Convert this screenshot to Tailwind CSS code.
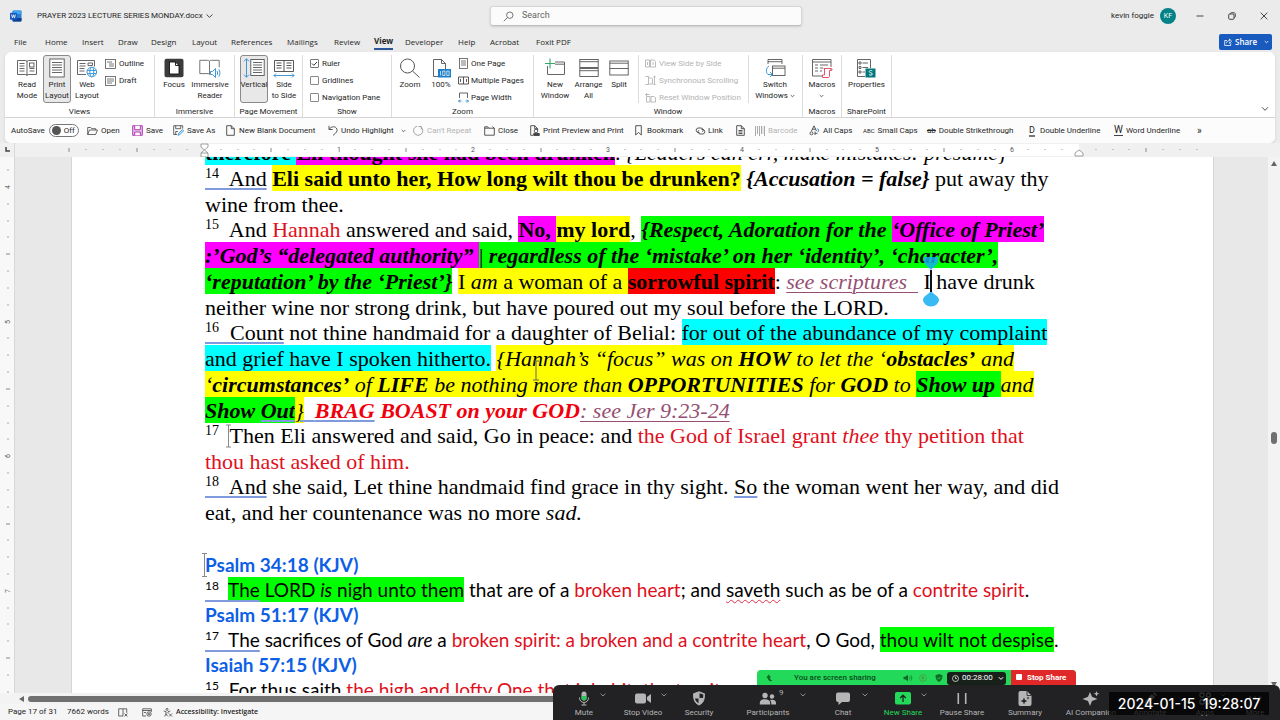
<!DOCTYPE html>
<html lang="en">
<head>
<meta charset="utf-8">
<title>PRAYER 2023 LECTURE SERIES MONDAY.docx</title>
<script src="https://cdn.jsdelivr.net/npm/@tailwindcss/browser@4"></script>
</head>
<body class="relative flex h-screen flex-col overflow-hidden bg-[#ebebeb] font-[Roboto,sans-serif] text-[8px] text-[#262626]">

<!-- Title bar -->
<header class="grid h-8 shrink-0 grid-cols-[490fr_312fr_478fr] items-center">
  <div class="flex items-center pl-[10px]">
    <svg width="12" height="12" viewBox="0 0 12 12"><rect x="2.500" y="0.500" width="9" height="11" rx="1" fill="#2b7cd3"/><path d="M2.500 1.500a1 1 0 0 1 1-1h7a1 1 0 0 1 1 1V4h-9z" fill="#41a5ee"/><path d="M2.500 8h9v2.500a1 1 0 0 1-1 1h-7a1 1 0 0 1-1-1z" fill="#103f91"/><rect x="0" y="2.700" width="7" height="7" rx="0.800" fill="#185abd"/><path d="M1.600 4.500l.9 3.400 1-3.100 1 3.100.9-3.400" fill="none" stroke="#fff" stroke-width="0.800"/></svg>
    <h1 class="ml-[15px] whitespace-nowrap text-[#262626]">PRAYER 2023 LECTURE SERIES MONDAY.docx</h1>
    <svg class="ml-[3px]" width="7" height="6" viewBox="0 0 7 6"><path d="M.6 1.500l2.900 2.900 2.900-2.900" fill="none" stroke="#333" stroke-width="0.900"/></svg>
  </div>
  <label class="flex h-5 items-center rounded-[3px] border border-[#d6d6d6] border-b-[#bdbdbd] bg-[#fbfbfb] pl-3 shadow-sm">
    <svg width="11" height="11" viewBox="0 0 11 11"><circle cx="6.800" cy="4.200" r="3.200" fill="none" stroke="#666" stroke-width="0.900"/><path d="M4.500 6.500L.8 10.200" stroke="#666" stroke-width="0.900"/></svg>
    <input class="ml-[8px] w-40 bg-transparent text-[9px] outline-none placeholder:text-[#666]" placeholder="Search" aria-label="Search">
  </label>
  <div class="flex items-center justify-end">
    <span class="text-[#262626]">kevin foggie</span>
    <span class="ml-[6px] flex size-4 items-center justify-center rounded-full bg-[#038387] text-[7px] text-white">KF</span>
    <button class="ml-[18px] flex w-3 justify-center" aria-label="Minimize"><svg width="8" height="8" viewBox="0 0 8 8"><path d="M.5 4h7" stroke="#333" stroke-width="0.900"/></svg></button>
    <button class="ml-[20px] flex w-3 justify-center" aria-label="Restore"><svg width="8" height="8" viewBox="0 0 8 8" fill="none" stroke="#333" stroke-width="0.900"><rect x="0.700" y="2" width="5.300" height="5.300" rx="1"/><path d="M2.300 1.700c.1-.6.500-1 1.100-1h2.400c.9 0 1.500.6 1.500 1.500v2.300c0 .6-.4 1-1 1.100"/></svg></button>
    <button class="ml-[20px] mr-[10px] flex w-3 justify-center" aria-label="Close"><svg width="8" height="8" viewBox="0 0 8 8"><path d="M.7.7l6.600 6.600M7.300.7L.7 7.300" stroke="#333" stroke-width="0.900"/></svg></button>
  </div>
</header>

<!-- Ribbon tabs -->
<nav class="flex h-5 shrink-0 items-center pl-[14px] leading-[14px] font-['Open_Sans',sans-serif]">
  <a href="#" class="w-[31px]">File</a><a href="#" class="w-[37px]">Home</a><a href="#" class="w-[36px]">Insert</a><a href="#" class="w-[33px]">Draw</a><a href="#" class="w-[41px]">Design</a><a href="#" class="w-[39px]">Layout</a><a href="#" class="w-[56px]">References</a><a href="#" class="w-[47px]">Mailings</a><a href="#" class="w-[40px]">Review</a><a href="#" class="w-[31px]"><span class="inline-block border-b-2 border-[#2b579a] font-bold text-[#1f1f1f]">View</span></a><a href="#" class="w-[53px]">Developer</a><a href="#" class="w-[32px]">Help</a><a href="#" class="w-[46px]">Acrobat</a><a href="#" class="whitespace-nowrap">Foxit PDF</a>
  <button class="ml-auto mr-2 flex h-4 w-[53px] items-center rounded-[2px] bg-[#185abd] pl-[5px] text-white">
    <svg width="8" height="8" viewBox="0 0 8 8" fill="none" stroke="#fff" stroke-width="0.800"><path d="M3 2.500H.7v5h6V5.300M2.500 5.300c.2-1.800 1.300-2.700 3-2.700V.9l2 2.300-2 2.100V3.800"/></svg>
    <span class="ml-[3px] text-[8px] font-semibold">Share</span>
    <svg class="ml-auto mr-[3px]" width="5" height="4" viewBox="0 0 5 4"><path d="M.7 1l1.800 1.800L4.300 1" fill="none" stroke="#fff" stroke-width="0.800"/></svg>
  </button>
</nav>

<!-- Ribbon -->
<section class="mx-[5px] flex h-[91px] shrink-0 flex-col rounded-md bg-white shadow-sm">
  <div class="flex h-[66px] border-b border-[#d4d4d4] pt-[3px] leading-[11px]">

    <div class="flex w-[150px] flex-col border-r border-[#dcdcdc]">
      <div class="flex h-[49px] gap-[2px] pl-2">
        <button class="flex w-7 flex-col items-center pt-[3px]"><svg class="mb-px shrink-0" width="22" height="20" viewBox="0 0 22 20" fill="none" stroke="#555" stroke-width="0.900"><path d="M1.500 2.500h8c1 0 1.500.5 1.500 1.500 0-1 .5-1.500 1.500-1.500h8v14h-8c-1 0-1.500.3-1.500 1.200 0-.9-.5-1.200-1.500-1.200h-8zM11 4v13.500"/><path d="M3.500 5.500h5M3.500 8h5M3.500 10.500h5M3.500 13h5M13.500 10.500h5M13.500 13h5"/><rect x="13.500" y="5" width="4.500" height="4"/></svg>Read<br>Mode</button>
        <button class="flex w-7 flex-col items-center rounded-[3px] border border-[#8a8a8a] bg-[#e8e8e8] pt-[2px]"><svg class="mb-px shrink-0" width="16" height="20" viewBox="0 0 16 20" fill="#fff" stroke="#555" stroke-width="0.900"><rect x="0.800" y="1" width="14.400" height="18"/><path d="M3 4.500h10M3 7h10M3 9.500h10M3 12h10M3 14.500h10"/></svg>Print<br>Layout</button>
        <button class="flex w-7 flex-col items-center pt-[3px]"><svg class="mb-px shrink-0" width="22" height="20" viewBox="0 0 22 20" fill="none" stroke="#555" stroke-width="0.900"><path d="M10 16.500H1.500v-14h17v6"/><path d="M3.500 5.500h6M3.500 8h6M3.500 10.500h5M3.500 13h5M12 5h4.500v2.500H12z"/><g stroke="#2a8dd4" fill="#fff"><circle cx="15.800" cy="14" r="4.800"/><ellipse cx="15.800" cy="14" rx="2" ry="4.800"/><path d="M11.300 12.400h9M11.300 15.600h9"/></g></svg>Web<br>Layout</button>
        <div class="flex flex-col gap-[6px] pl-[2px] pt-[3px]">
          <button class="flex items-center gap-[3px]"><svg width="11" height="10" viewBox="0 0 11 10" fill="none" stroke="#555" stroke-width="0.800"><rect x="0.500" y="0.500" width="10" height="9"/><path d="M2 3h5M4 5h5M4 7h5"/></svg>Outline</button>
          <button class="flex items-center gap-[3px]"><svg width="11" height="10" viewBox="0 0 11 10" fill="none" stroke="#555" stroke-width="0.800"><rect x="0.500" y="0.500" width="10" height="9"/><path d="M2 3h7M2 5h7M2 7h5"/></svg>Draft</button>
        </div>
      </div>
      <p class="mt-[3px] text-center">Views</p>
    </div>

    <div class="flex w-[80px] flex-col border-r border-[#dcdcdc]">
      <div class="flex h-[49px] pl-[3px]">
        <button class="flex w-8 flex-col items-center pt-[3px]"><svg class="mb-px shrink-0" width="20" height="20" viewBox="0 0 20 20"><rect x="0.500" y="0.800" width="19" height="18.400" rx="2" fill="#3b3b3b"/><path d="M5.500 4h6l3.500 3.500V16H5.500z" fill="#fff" stroke="#111" stroke-width="0.900"/><path d="M11.500 4v3.500H15" fill="none" stroke="#111" stroke-width="0.900"/></svg>Focus</button>
        <button class="flex w-10 flex-col items-center pt-[3px]"><svg class="mb-px shrink-0" width="22" height="20" viewBox="0 0 22 20" fill="none" stroke="#666" stroke-width="0.900"><path d="M10.500 17c0-.9-.6-1.400-1.500-1.400H.8V2.300h8c1.200 0 1.700.6 1.700 1.600 0-1 .6-1.600 1.700-1.600h8v7M10.500 4v12"/><g stroke="#2a8dd4"><path d="M11.500 13.500h2l3-3v9l-3-3h-2zM18 13c.8 1.200.8 2.800 0 4M19.800 11.300c1.500 2.200 1.500 5 0 7.400"/></g></svg>Immersive<br>Reader</button>
      </div>
      <p class="mt-[3px] text-center">Immersive</p>
    </div>

    <div class="flex w-[68px] flex-col border-r border-[#dcdcdc]">
      <div class="flex h-[49px] pl-[5px]">
        <button class="flex w-7 flex-col items-center rounded-[3px] border border-[#8a8a8a] bg-[#e8e8e8] pt-[2px]"><svg class="mb-px shrink-0" width="22" height="20" viewBox="0 0 22 20" fill="none" stroke="#555" stroke-width="0.900"><path d="M3.500.8v18.400M1 3.300L3.500.8 6 3.300M1 16.700l2.500 2.500L6 16.700" stroke="#2a8dd4"/><rect x="7.800" y="1.500" width="13.400" height="16" fill="#fff"/><path d="M10 4.500h9M10 7h9M10 9.500h9M10 12h9M10 14.500h9"/></svg>Vertical</button>
        <button class="flex w-8 flex-col items-center pt-[3px]"><svg class="mb-px shrink-0" width="22" height="20" viewBox="0 0 22 20" fill="none" stroke="#444" stroke-width="0.900"><path d="M1.500 2.500h19v11h-19zM11 2.500v11" /><path d="M3.500 5h5M3.500 7.500h5M3.500 10h5M13.500 5h5M13.500 7.500h5M13.500 10h5"/><path d="M1 17.500h20M3 15.500l-2 2 2 2M19 15.500l2 2-2 2" stroke="#2a8dd4"/></svg>Side<br>to Side</button>
      </div>
      <p class="mt-[3px] whitespace-nowrap text-center">Page Movement</p>
    </div>

    <div class="flex w-[89px] flex-col border-r border-[#dcdcdc]">
      <div class="flex h-[49px] flex-col gap-[6px] pl-[7px] pt-[3px]">
        <label class="flex items-center gap-[3px] whitespace-nowrap"><span class="relative flex"><input type="checkbox" checked class="size-[9px] appearance-none rounded-[1px] border border-[#777] bg-white"><svg class="absolute inset-0" width="9" height="9" viewBox="0 0 9 9"><path d="M2 4.500l1.800 1.800L7 3" fill="none" stroke="#333"/></svg></span>Ruler</label>
        <label class="flex items-center gap-[3px] whitespace-nowrap"><input type="checkbox" class="size-[9px] appearance-none rounded-[1px] border border-[#888] bg-white">Gridlines</label>
        <label class="flex items-center gap-[3px] whitespace-nowrap"><input type="checkbox" class="size-[9px] appearance-none rounded-[1px] border border-[#888] bg-white">Navigation Pane</label>
      </div>
      <p class="mt-[3px] text-center">Show</p>
    </div>

    <div class="flex w-[142px] flex-col border-r border-[#dcdcdc]">
      <div class="flex h-[49px] pl-[2px]">
        <button class="flex w-8 flex-col items-center pt-[3px]"><svg class="mb-px shrink-0" width="20" height="20" viewBox="0 0 20 20" fill="none" stroke="#555"><circle cx="7.500" cy="8" r="7"/><path d="M12.500 13l7 6.500"/></svg>Zoom</button>
        <button class="flex w-[30px] flex-col items-center pt-[3px]"><svg class="mb-px shrink-0" width="20" height="20" viewBox="0 0 20 20"><path d="M7 18.500H2.500v-17h8l4 4V11M10.500 1.500v4h4" fill="none" stroke="#555" stroke-width="0.900"/><rect x="7" y="11" width="13" height="8.500" fill="#1d7fc9"/><path d="M9.500 13v4.500M11.700 13h2.300v4.500h-2.300zM15.800 13h2.300v4.500h-2.300z" fill="none" stroke="#fff" stroke-width="0.700"/></svg>100%</button>
        <div class="flex flex-col gap-[6px] whitespace-nowrap pl-[2px] pt-[3px]">
          <button class="flex items-center gap-[2px]"><svg width="11" height="11" viewBox="0 0 11 11" fill="none" stroke="#555" stroke-width="0.800"><rect x="1.500" y="0.500" width="8" height="10"/><path d="M3 3h5M3 5h5M3 7h5"/></svg>One Page</button>
          <button class="flex items-center gap-[2px]"><svg width="11" height="11" viewBox="0 0 11 11" fill="none" stroke="#444" stroke-width="0.900"><path d="M.5 2h10v7H.5zM5.500 2v7M2.500 4v3M8.500 4v3" /></svg>Multiple Pages</button>
          <button class="flex items-center gap-[2px]"><svg width="11" height="11" viewBox="0 0 11 11" fill="none" stroke="#555" stroke-width="0.900"><path d="M1.500 6V1h8v5"/><path d="M.5 9h3M7.500 9h3M2 7.500L.5 9 2 10.500M9 7.500L10.500 9 9 10.500" stroke="#2a8dd4"/></svg>Page Width</button>
        </div>
      </div>
      <p class="mt-[3px] text-center">Zoom</p>
    </div>

    <div class="flex w-[269px] flex-col border-r border-[#dcdcdc]">
      <div class="flex h-[49px] pl-1">
        <button class="flex w-[34px] flex-col items-center pt-[3px]"><svg class="mb-px shrink-0" width="22" height="20" viewBox="0 0 22 20" fill="none" stroke="#555" stroke-width="0.900"><path d="M11 4h9.500v12.500h-17V8M11 6.200h9.500"/><path d="M6 .5v10M1 5.500h10" stroke="#35a86b" stroke-width="1.100"/></svg>New<br>Window</button>
        <button class="flex w-[33px] flex-col items-center whitespace-nowrap pt-[3px]"><svg class="mb-px shrink-0" width="20" height="20" viewBox="0 0 20 20" fill="none" stroke="#555" stroke-width="0.900"><rect x="0.800" y="1.500" width="18.400" height="8"/><rect x="0.800" y="10.500" width="18.400" height="8"/><path d="M.8 3.700h18.400M.8 12.700h18.400"/></svg>Arrange<br>All</button>
        <button class="flex w-[28px] flex-col items-center pt-[3px]"><svg class="mb-px shrink-0" width="20" height="20" viewBox="0 0 20 20" fill="none" stroke="#555" stroke-width="0.900"><rect x="0.800" y="3" width="18.400" height="14"/><path d="M.8 5.200h18.400M.8 10.500h18.400"/></svg>Split</button>
        <div class="ml-[5px] flex w-[111px] flex-col gap-[6px] whitespace-nowrap border-x border-[#dcdcdc] pl-[6px] pt-[3px] text-[#b3b3b3]">
          <button class="flex items-center gap-[3px]" disabled><svg width="11" height="11" viewBox="0 0 11 11" fill="none" stroke="#b3b3b3" stroke-width="0.900"><path d="M.5 2h4v7h-4zM5.500 2H9l1.500 1.500V9h-5zM2.500 4v3M8 4v3"/></svg>View Side by Side</button>
          <button class="flex items-center gap-[3px]" disabled><svg width="11" height="11" viewBox="0 0 11 11" fill="none" stroke="#b3b3b3" stroke-width="0.900"><path d="M.5 1.500h3v8h-3M4 3h2.500l1 1v5H4M9.500 1v9M8.300 2.200L9.500 1l1.200 1.200M8.300 8.800L9.500 10l1.200-1.200"/></svg>Synchronous Scrolling</button>
          <button class="flex items-center gap-[3px]" disabled><svg width="11" height="11" viewBox="0 0 11 11" fill="none" stroke="#b3b3b3" stroke-width="0.900"><path d="M1.500 4.500h3.500v5.500H1.500zM6 4.500h3l1.500 1.500v4H6zM.5 2.500h4M2 1L.5 2.500 2 4"/></svg>Reset Window Position</button>
        </div>
        <button class="flex w-[52px] flex-col items-center pt-[3px]"><svg class="mb-px shrink-0" width="22" height="20" viewBox="0 0 22 20" fill="none" stroke="#555" stroke-width="0.900"><path d="M4 6V1.500h14V6M4 3.700h14"/><rect x="8.500" y="8" width="12.500" height="9.500" fill="#fff"/><path d="M8.500 10.200H21"/><path d="M5 8c-3 2-3.500 6-1 8.500h4M6 14l2.500 2.500L6 19" stroke="#2a8dd4"/></svg>Switch<span class="flex items-center gap-[2px]">Windows <svg width="5" height="4" viewBox="0 0 5 4"><path d="M.7 1l1.800 1.800L4.300 1" fill="none" stroke="#444" stroke-width="0.800"/></svg></span></button>
      </div>
      <p class="mt-[3px] text-center">Window</p>
    </div>

    <div class="flex w-[39px] flex-col border-r border-[#dcdcdc]">
      <div class="flex h-[49px] justify-center">
        <button class="flex flex-col items-center pt-[3px]"><svg class="mb-px shrink-0" width="22" height="20" viewBox="0 0 22 20" fill="none" stroke="#555" stroke-width="0.900"><path d="M11 18H1.500V1.500h18.500V9M1.500 4H20M4 7h3M9 7h8M4 10h3M9 10h3M4 13h3M9 13h2"/><path d="M12.500 10.500h7.500v2h-1.500V18c0 1-.5 1.500-1.500 1.500h-5.500V17h2V10.500M20 10.500c1.500 0 1.500 2 0 2" stroke="#e0415a" fill="#fff"/></svg>Macros<svg class="mt-[4px]" width="5" height="4" viewBox="0 0 5 4"><path d="M.7 1l1.800 1.800L4.300 1" fill="none" stroke="#444" stroke-width="0.800"/></svg></button>
      </div>
      <p class="mt-[3px] text-center">Macros</p>
    </div>

    <div class="flex w-[50px] flex-col border-r border-[#dcdcdc]">
      <div class="flex h-[49px] justify-center">
        <button class="flex flex-col items-center pt-[3px]"><svg class="mb-px shrink-0" width="20" height="20" viewBox="0 0 20 20" fill="none" stroke="#555" stroke-width="0.900"><path d="M9 18.500H1.500v-17h13V10M6.500 5H12M6.500 9.500H12M6.500 14H9"/><path d="M3 4h2v2H3zM3 8.500h2v2H3zM3 13h2v2H3z"/><rect x="9.500" y="10.500" width="10" height="9" fill="#03787c" stroke="none"/><path d="M16.300 12.900c-.8-.6-3.100-.6-3.100.7 0 1.500 3.200.9 3.200 2.400 0 1.400-2.500 1.400-3.400.6" stroke="#fff"/></svg>Properties</button>
      </div>
      <p class="mt-[3px] text-center">SharePoint</p>
    </div>
    <button class="ml-auto mr-[6px] self-end pb-[5px]" aria-label="Collapse ribbon"><svg width="8" height="6" viewBox="0 0 8 6"><path d="M1 1.300l3 3 3-3" fill="none" stroke="#333" stroke-width="0.900"/></svg></button>
  </div>

  <!-- Quick access toolbar -->
  <div class="flex flex-1 items-center whitespace-nowrap rounded-b-md bg-[#fcfcfc] pl-[6px]">
    <label class="flex w-[76px] items-center">AutoSave
      <span class="relative ml-1 flex"><input type="checkbox" class="h-[13px] w-[30px] appearance-none rounded-full border border-[#777] bg-white"><span class="absolute left-[3px] top-[2px] size-[9px] rounded-full bg-[#555]"></span><span class="absolute left-[15px] top-px">Off</span></span></label>
    <button class="flex w-[45px] items-center gap-[3px]"><svg width="11" height="10" viewBox="0 0 11 10" fill="none" stroke="#444" stroke-width="0.800"><path d="M.7 8.500v-7h3l1 1.200h4V4M.7 8.500L2.500 4h8L8.600 8.500z"/></svg>Open</button>
    <button class="flex w-[41px] items-center gap-[3px]"><svg width="11" height="11" viewBox="0 0 11 11" fill="none" stroke="#b13bb5"><path d="M.7.700h9.600v9.600H.7z" fill="#e8c5ea"/><path d="M2.700.7v4h5.600v-4M2.700 10.300V7h5.600v3.300" fill="#fff"/></svg>Save</button>
    <button class="flex w-[53px] items-center gap-[3px]"><svg width="11" height="11" viewBox="0 0 11 11" fill="none" stroke="#444" stroke-width="0.800"><path d="M4 9.500H.7V.7h9v3M2.700.7v3h5v-3M2.700 9.500V6.500H5"/><path d="M5 10.300l.5-2L9.500 4.500l1.200 1.200-4 4z" stroke="#2a8dd4" fill="#bfe0f7"/></svg>Save As</button>
    <button class="flex w-[102px] items-center gap-1"><svg width="9" height="11" viewBox="0 0 9 11" fill="none" stroke="#444" stroke-width="0.900"><path d="M.7.700h4.600l3 3v6.600H.7zM5.300.7v3h3"/></svg>New Blank Document</button>
    <button class="flex w-[85px] items-center gap-[3px]"><svg width="10" height="11" viewBox="0 0 10 11" fill="none" stroke="#444" stroke-width="0.900"><path d="M1 .8v3.700h3.700M1.200 4.300C3 1.500 6.500 1 8.300 3c1.500 1.800.8 3.800-.8 5.200L5 10.400"/></svg>Undo Highlight<svg class="ml-auto mr-[7px]" width="5" height="4" viewBox="0 0 5 4"><path d="M.7 1l1.800 1.800L4.300 1" fill="none" stroke="#444" stroke-width="0.800"/></svg></button>
    <button class="flex w-[71px] items-center gap-[3px] text-[#b3b3b3]" disabled><svg width="11" height="11" viewBox="0 0 11 11" fill="none" stroke="#999" stroke-width="0.900"><path d="M4 1.200a4.600 4.600 0 1 0 4 .8M8.300 4.500V1.500H5.500"/></svg>Can't Repeat</button>
    <button class="flex w-[46px] items-center gap-[3px]"><svg width="11" height="10" viewBox="0 0 11 10" fill="none" stroke="#444" stroke-width="0.900"><path d="M.7.800h3l1 1.400h5.600v7H.7zM.7 2.200h4M8.500.5L10.500 2.500"/></svg>Close</button>
    <button class="flex w-[105px] items-center gap-[3px]"><svg width="10" height="11" viewBox="0 0 10 11" fill="none" stroke="#444" stroke-width="0.900"><path d="M3 10.300H.7V.7h4l3 3V5M4.700.7v3h3"/><circle cx="6" cy="6" r="1.800"/><path d="M3.700 8.500h5.600v2H3.700z" fill="#444"/></svg>Print Preview and Print</button>
    <button class="flex w-[60px] items-center gap-[5px]"><svg width="7" height="11" viewBox="0 0 7 11" fill="none" stroke="#444" stroke-width="0.900"><path d="M.7.700h5.600v9.300L3.500 7.500.7 10z"/></svg>Bookmark</button>
    <button class="flex w-[41px] items-center gap-[2px]"><svg width="11" height="8" viewBox="0 0 11 8" fill="none" stroke="#444" stroke-width="0.900"><path d="M4.500 5.500H3A2.300 2.300 0 0 1 3 1h3a2.200 2.200 0 0 1 1.500 3.800M6.500 2.500H8A2.300 2.300 0 0 1 8 7H5.200a2.200 2.200 0 0 1-1.500-3.700"/></svg>Link</button>
    <button class="flex w-[19px] items-center" aria-label="Document"><svg width="9" height="11" viewBox="0 0 9 11" fill="none" stroke="#444" stroke-width="0.900"><path d="M.7.700h4.600l3 3v6.600H.7zM5.300.7v3h3M2.500 5.500h4M2.500 7h4M2.500 8.500h4"/></svg></button>
    <button class="flex w-[54px] items-center gap-[2px] text-[#b3b3b3]" disabled><svg width="11" height="10" viewBox="0 0 11 10" stroke="#aaa"><path d="M.5 0v10M2.500 0v8M4.500 0v10M6.500 0v8M9.500 0v10" /><path d="M8 0v8" stroke-width="0.500"/></svg>Barcode</button>
    <button class="flex w-[54px] items-center gap-[3px]"><svg width="11" height="11" viewBox="0 0 11 11" fill="none" stroke="#444" stroke-width="0.900"><path d="M2.500 6L5 .8 7.500 6M3.300 4.200h3.400"/><path d="M8 3.500l2 1.500-1.200 2" stroke="#2a8dd4"/><circle cx="2.500" cy="8.300" r="1.500"/><path d="M6 6.500v3.500M6 8.300h2.500"/></svg>All Caps</button>
    <button class="flex w-[64px] items-center gap-[3px]"><span class="text-[6px]">ABC</span>Small Caps</button>
    <button class="flex w-[102px] items-center gap-[3px]"><span class="line-through">ab</span>Double Strikethrough</button>
    <button class="flex w-[85px] items-center gap-[5px]"><span class="border-b-2 border-[#777] text-[9px] leading-[10px]">D</span>Double Underline</button>
    <button class="flex w-[83px] items-center gap-[3px]"><span class="border-b border-[#444] text-[10px] leading-[10px]">W</span>Word Underline</button>
    <button class="text-[10px]" aria-label="More commands">»</button>
  </div>
</section>

<!-- Horizontal ruler -->
<div class="relative flex h-[14px] shrink-0 items-center bg-[#f0f0f0] text-[7px] text-[#555]">
  <span class="w-[15px] self-stretch border-r border-[#d8d8d8] pl-[5px] pt-[4px]"><svg width="5" height="5" viewBox="0 0 5 5"><path d="M1 0v4h4" fill="none" stroke="#444" stroke-width="1.500"/></svg></span>
  <svg id="hruler" class="h-[14px] flex-1" role="img" aria-label="Horizontal ruler"><rect x="189" y="1" width="875" height="12" fill="#fff"/></svg>
</div>

<!-- Document area -->
<main class="relative flex min-h-0 flex-1 bg-[#e8e8e8]">
  <svg id="vruler" class="h-full w-[15px] shrink-0 border-r border-[#d8d8d8] bg-[#f8f8f8]" role="img" aria-label="Vertical ruler"></svg>
  <article class="ml-14 mr-[66px] flex-1 overflow-hidden whitespace-nowrap border-x border-[#d6d6d6] bg-white pl-[133px] text-[22px] leading-[26px] text-black font-['Liberation_Serif',serif]">
    <p class="-mt-[17px]"><b class="bg-[#00ffff] pt-px">therefore </b><b class="bg-[#ff00ff] pt-px">Eli thought she had been drunken</b>. <i>{Leaders can err, make mistakes: presume}</i></p>
    <p><span class="underline decoration-[#7f9bdc] decoration-2 underline-offset-2"><sup class="static align-super text-[14px] leading-none">14</sup>&nbsp; And</span> <b class="bg-[#ffff00] pt-px">Eli said unto her, How long wilt thou be drunken?</b> <b><i>{Accusation = false}</i></b> put away thy<br>wine from thee.</p>
    <p class="-mt-px"><sup class="static align-super text-[14px] leading-none">15</sup>&nbsp; And <span class="text-[#e0101c]">Hannah</span> answered and said, <b class="bg-[#ff00ff] pt-px">No, </b><b class="bg-[#ffff00] pt-px">my lord</b>, <b><i><span class="bg-[#00ff00] pt-px">{Respect, Adoration for the </span><span class="bg-[#ff00ff] pt-px">‘Office of Priest’</span><br><span class="bg-[#ff00ff] pt-px">:’God’s “delegated authority” </span><span class="bg-[#00ff00] pt-px"><span class="font-normal not-italic">|</span> regardless of the ‘mistake’ on her ‘identity’, ‘character’,</span><br><span class="bg-[#00ff00] pt-px">‘reputation’ by the ‘Priest’}</span></i></b> <span class="bg-[#ffff00] pt-px">I <i>am</i> a woman of a </span><b class="bg-[#ff0000] pt-px">sorrowful spirit</b>: <a href="#" class="italic text-[#954f72] underline decoration-1 underline-offset-3">see scriptures&nbsp; </a>&nbsp;I<span class="relative"><svg class="pointer-events-none absolute -left-2 -top-3" width="16" height="50" viewBox="0 0 16 50"><path d="M1 0h14v4c0 4-4 5-7 9-3-4-7-5-7-9zM8 34c3 4 8 5 8 9a7.500 6 0 0 1-16 0c0-4 5-5 8-9z" fill="#15aef0" fill-opacity="0.850"/><path d="M8 13v22" stroke="#111" stroke-width="2"/></svg></span> have drunk<br>neither wine nor strong drink, but have poured out my soul before the LORD.</p>
    <p class="-mt-px"><span class="underline decoration-[#7f9bdc] decoration-2 underline-offset-2"><sup class="static align-super text-[14px] leading-none">16</sup>&nbsp; Count</span> not thine handmaid for a daughter of Belial: <span class="bg-[#00ffff] pt-px">for out of the abundance of my complaint</span><br><span class="bg-[#00ffff] pt-px">and grief have I spoken hitherto.</span> <i><span class="bg-[#ffff00] pt-px">{Hannah’s “focus” was on <b>HOW</b> to let the ‘<b>obstacles’</b> and</span><br><span class="bg-[#ffff00] pt-px">‘<b>circumstances’</b> of <b>LIFE</b> be nothing more than <b>OPPORTUNITIES</b> for <b>GOD</b> to </span><b class="bg-[#00ff00] pt-px">Show up </b><span class="bg-[#ffff00] pt-px">and</span><br><b class="bg-[#00ff00] pt-px">Show <span class="underline decoration-[#7f9bdc] decoration-2 underline-offset-2">Out</span></b><span class="underline decoration-[#7f9bdc] decoration-2 underline-offset-2"><span class="bg-[#ffff00] pt-px">}</span>&nbsp; <b class="text-[#f0000c]">BRAG</b></span><b class="text-[#f0000c]"> BOAST on your GOD</b><a href="#" class="text-[#954f72] underline decoration-1 underline-offset-3">: see Jer 9:23-24</a></i></p>
    <p class="-mt-px"><sup class="static align-super text-[14px] leading-none">17</sup>&nbsp; Then Eli answered and said, Go in peace: and <span class="text-[#e0101c]">the God of Israel grant <i>thee</i> thy petition that<br>thou hast asked of him.</span></p>
    <p class="-mt-px"><span class="underline decoration-[#7f9bdc] decoration-2 underline-offset-2"><sup class="static align-super text-[14px] leading-none">18</sup>&nbsp; And</span> she said, Let thine handmaid find grace in thy sight. <span class="underline decoration-[#7f9bdc] decoration-2 underline-offset-2">So</span> the woman went her way, and did<br>eat, and her countenance was no more <i>sad.</i></p>
    <section class="mt-[26px] text-[19px] leading-[25px] font-['Lato',sans-serif]">
      <h2 class="font-bold text-[#0d5fe6]">Psalm 34:18 (KJV)</h2>
      <p><span class="underline decoration-[#7f9bdc] decoration-2 underline-offset-3"><sup class="static align-super text-[12px] leading-none">18</sup>&nbsp; </span><span class="bg-[#00ff00] py-px"><span class="underline decoration-[#7f9bdc] decoration-2 underline-offset-3">The</span> LORD <i>is</i> nigh unto them</span> that are of a <span class="text-[#e0101c]">broken heart</span>; and <span class="underline decoration-[#e0304a] decoration-wavy decoration-1 underline-offset-2">saveth</span> such as be of a <span class="text-[#e0101c]">contrite spirit</span>.</p>
      <h2 class="font-bold text-[#0d5fe6]">Psalm 51:17 (KJV)</h2>
      <p><span class="underline decoration-[#7f9bdc] decoration-2 underline-offset-3"><sup class="static align-super text-[12px] leading-none">17</sup>&nbsp; The</span> sacrifices of God <i>are</i> a <span class="text-[#e0101c]">broken spirit: a broken and a contrite heart</span>, O God, <span class="bg-[#00ff00] py-px">thou wilt not despise</span>.</p>
      <h2 class="font-bold text-[#0d5fe6]">Isaiah 57:15 (KJV)</h2>
      <p><sup class="static align-super text-[12px] leading-none">15</sup>&nbsp; For thus saith <span class="text-[#e0101c]">the high and lofty One that inhabiteth eternity</span></p>
    </section>
  </article>

  <!-- Text carets and mouse pointer over the page -->
  <svg class="pointer-events-none absolute left-0 top-0" width="1000" height="440" viewBox="0 157 1000 440">
    <path d="M533 361h6M536 361v19M533 380h6" stroke="#666" fill="none"/>
    <path d="M226 425h5M228.500 425v22M226 447h5M202 553.500h5M204.500 553.500v23M202 576.500h5" stroke="#888" fill="none"/>
  </svg>

  <!-- Vertical scrollbar -->
  <div class="absolute inset-y-0 right-0 flex w-3 flex-col items-center bg-[#f3f3f3] py-1">
    <svg width="6" height="5" viewBox="0 0 6 5"><path d="M3 0l3 5H0z" fill="#666"/></svg>
    <span class="mt-auto h-[12px] w-[6px] rounded-sm bg-[#707070]"></span>
    <svg class="mb-[2px] mt-[238px]" width="6" height="5" viewBox="0 0 6 5"><path d="M3 5l3-5H0z" fill="#666"/></svg>
  </div>
</main>

<!-- Horizontal scrollbar -->
<div class="flex h-[11px] shrink-0 items-center bg-[#f3f3f3] pl-[19px]">
  <svg width="5" height="6" viewBox="0 0 5 6"><path d="M0 3l5-3v6z" fill="#666"/></svg>
  <span class="ml-[4px] h-[6px] flex-1 rounded-full bg-[#707070]"></span>
</div>

<!-- Status bar -->
<footer class="flex h-4 shrink-0 items-center bg-[#f5f5f5] pl-2">
  <span class="w-[59px]">Page 17 of 31</span>
  <span class="w-[51px]">7662 words</span>
  <svg width="10" height="9" viewBox="0 0 10 9" fill="none" stroke="#444" stroke-width="0.800"><path d="M5 8H.7V.8h8v4M5 1v7M6.500 5.500l3 3M9.500 5.500l-3 3"/></svg>
  <svg class="ml-[14px]" width="10" height="9" viewBox="0 0 10 9" fill="none" stroke="#444" stroke-width="0.800"><path d="M4 8H.7V.8h8.600V4M.7 2.500h8.600M2 4.500h2"/><circle cx="7" cy="6" r="2.200"/><circle cx="7" cy="6" r="0.700"/></svg>
  <svg class="ml-[11px] mr-[3px]" width="10" height="9" viewBox="0 0 10 9" fill="none" stroke="#444" stroke-width="0.800"><circle cx="4" cy="1.400" r="1"/><path d="M.7 3l2.300.7v2L1.700 8.500M7.300 3L5 3.700v1.600M3 5.600L4.500 8M6 5.500l3 3M9 5.500l-3 3"/></svg>
  <span class="text-[7px] font-semibold font-['Open_Sans',sans-serif]">Accessibility: Investigate</span>
</footer>

<!-- Screen-sharing banner -->
<div class="absolute bottom-[34px] left-[757px] right-[204px] flex h-4 items-center overflow-hidden rounded-t-[4px] bg-[#23d959] text-[#0c4a1d]">
  <svg class="ml-[9px]" width="7" height="8" viewBox="0 0 7 8"><path d="M2.500.5L5 3.200 3.800 3.400C4 5 5 6 6.500 6.700 4.500 7.800 2 7 1.600 3.800L.3 4z" fill="#0c6a25"/></svg>
  <span class="ml-[21px] w-[109px] whitespace-nowrap font-medium">You are screen sharing</span>
  <svg width="10" height="8" viewBox="0 0 10 8"><path d="M.5 2.800h1.700L5 .8v6.400L2.200 5.200H.5z" fill="#0c6a25"/><path d="M6.300 2.500c.7.900.7 2.100 0 3M7.800 1.300c1.400 1.700 1.400 3.700 0 5.400" fill="none" stroke="#0c6a25" stroke-width="0.700"/></svg>
  <svg class="ml-[6px]" width="8" height="8" viewBox="0 0 8 8"><circle cx="4" cy="4" r="3.400" fill="none" stroke="#4f9a38" stroke-width="0.800"/><circle cx="4" cy="4" r="1.400" fill="#4f9a38"/></svg>
  <svg class="ml-[8px]" width="8" height="8" viewBox="0 0 8 8"><path d="M4 0l3.500 1.300C7.500 4.500 6.800 6.800 4 8 1.200 6.800.5 4.500.5 1.300z" fill="#0c6a25"/><path d="M2.300 3.800l1.300 1.300 2.200-2.300" fill="none" stroke="#23d959" stroke-width="0.900"/></svg>
  <button class="ml-auto flex h-[13px] w-[59px] shrink-0 items-center rounded-[3px] bg-[#17211a] pl-[5px] text-white"><svg width="7" height="7" viewBox="0 0 7 7" fill="none" stroke="#fff" stroke-width="0.700"><circle cx="3.500" cy="3.500" r="3"/><path d="M3.500 1.600v2h1.500"/></svg><span class="ml-[3px] text-[8px]">00:28:00</span><svg class="ml-auto mr-[2px]" width="6" height="5" viewBox="0 0 6 5"><path d="M.8 1.200L3 3.400l2.200-2.200" fill="none" stroke="#fff"/></svg></button>
  <button class="ml-[5px] flex h-full w-[65px] shrink-0 items-center bg-[#e02828] pl-[5px] font-bold text-white"><span class="mb-[2px] mr-[5px] size-[6px] rounded-[1px] bg-white"></span>Stop Share</button>
</div>

<!-- Meeting controls -->
<div class="absolute bottom-0 left-[553px] right-0 flex h-[35px] rounded-t-md bg-[#222224] leading-[12px] text-[#b5b5b5]">
  <button class="relative flex w-[62px] flex-col items-center pt-[6px]"><svg class="mb-px" width="12" height="15" viewBox="0 0 12 15"><rect x="3.500" y="0.500" width="5" height="9" rx="2.500" fill="#b5b5b5"/><path d="M3.500 5h5v2a2.500 2.500 0 0 1-5 0z" fill="#2bc45a"/><path d="M1.500 6.500v.5a4.500 4.500 0 0 0 9 0v-.5M6 11.500V14M3.500 14h5" fill="none" stroke="#b5b5b5"/></svg>Mute<svg class="absolute left-[47px] top-[8px]" width="6" height="4" viewBox="0 0 6 4"><path d="M.6.6L3 3 5.400.6" fill="none" stroke="#999" stroke-width="0.900"/></svg></button>
  <button class="relative flex w-[56px] flex-col items-center whitespace-nowrap pt-[6px]"><svg class="mb-px" width="18" height="15" viewBox="0 0 18 15" fill="#b5b5b5"><rect x="1" y="2.500" width="11" height="10" rx="2"/><path d="M13 6l4-3v9l-4-3z"/></svg>Stop Video<svg class="absolute left-[46px] top-[8px]" width="6" height="4" viewBox="0 0 6 4"><path d="M.6.6L3 3 5.400.6" fill="none" stroke="#999" stroke-width="0.900"/></svg></button>
  <button class="flex w-[56px] flex-col items-center pt-[6px]"><svg class="mb-px" width="14" height="15" viewBox="0 0 14 15"><path d="M7 .8l5.500 2C12.500 8.500 11.500 12 7 14 2.500 12 1.500 8.500 1.500 2.800z" fill="#b5b5b5" stroke="#b5b5b5"/><path d="M7.500 2.200l3.800 1.300c0 1.300 0 2.500-.3 3.500H7.500zM6.500 7.500v4.700C4.500 11.200 3.500 9.700 3 7.500z" fill="#222224"/></svg>Security</button>
  <button class="relative flex w-[82px] flex-col items-center pt-[6px]"><svg class="mb-px" width="18" height="15" viewBox="0 0 18 15" fill="#b5b5b5"><circle cx="6" cy="4.500" r="2.700"/><path d="M.8 13.500V12c0-2.500 2-3.700 5.200-3.700s5.200 1.200 5.200 3.700v1.500z"/><circle cx="13" cy="5.500" r="2.200"/><path d="M12.300 13.500c0-2.200-.2-3.300-1.300-4.500 3.500-.8 6 .3 6 3v1.500z"/></svg>Participants<span class="absolute left-[52px] top-[2px]">9</span><svg class="absolute left-[73px] top-[8px]" width="6" height="4" viewBox="0 0 6 4"><path d="M.6.6L3 3 5.400.6" fill="none" stroke="#999" stroke-width="0.900"/></svg></button>
  <button class="relative flex w-[68px] flex-col items-center pt-[6px]"><svg class="mb-px" width="16" height="15" viewBox="0 0 16 15" fill="#b5b5b5"><path d="M3 1.500h10a2 2 0 0 1 2 2V9a2 2 0 0 1-2 2H7l-3.500 3v-3H3a2 2 0 0 1-2-2V3.500a2 2 0 0 1 2-2z"/></svg>Chat<svg class="absolute left-[53px] top-[8px]" width="6" height="4" viewBox="0 0 6 4"><path d="M.6.6L3 3 5.400.6" fill="none" stroke="#999" stroke-width="0.900"/></svg></button>
  <button class="relative flex w-[52px] flex-col items-center whitespace-nowrap pt-[6px] text-[#23d959]"><svg class="mb-px" width="16" height="15" viewBox="0 0 16 15"><rect y="1" width="16" height="12.500" rx="2" fill="#23d959"/><path d="M8 11V4.500M5.200 7L8 4.200 10.800 7" fill="none" stroke="#222224" stroke-width="1.300"/></svg>New Share<svg class="absolute left-[44px] top-[8px]" width="6" height="4" viewBox="0 0 6 4"><path d="M.6.6L3 3 5.400.6" fill="none" stroke="#999" stroke-width="0.900"/></svg></button>
  <button class="flex w-[66px] flex-col items-center whitespace-nowrap pt-[6px]"><svg class="mb-px" width="12" height="15" viewBox="0 0 12 15"><path d="M2.300 2v11M9.700 2v11" stroke="#b5b5b5" stroke-width="1.600"/></svg>Pause Share</button>
  <button class="flex w-[60px] flex-col items-center pt-[6px]"><svg class="mb-px" width="14" height="15" viewBox="0 0 14 15"><path d="M2 0h7l4.500 4.500V13a2 2 0 0 1-2 2H2.500a2 2 0 0 1-2-2V2A2 2 0 0 1 2 0z" fill="#b5b5b5"/><path d="M9 0v4.500h4.500" fill="none" stroke="#222224" stroke-width="0.800"/><path d="M6 6.500l1 2.500 2.500 1L7 11l-1 2.500L5 11l-2.500-1L5 9zM10 5.500l.4 1.100 1.100.4-1.100.4-.4 1.100-.4-1.100L8.500 7l1.100-.4z" fill="#222224"/></svg>Summary</button>
  <button class="flex w-[72px] flex-col items-center whitespace-nowrap pt-[6px]"><svg class="mb-px" width="18" height="15" viewBox="0 0 18 15" fill="#b5b5b5"><path d="M8 1l2 4.700L15.500 8 10 10l-2 5-2-5L.5 8 6 5.700zM14.500 0l.8 1.900 2 .8-2 .8-.8 2-.8-2-2-.8 2-.8z"/></svg>AI Companion</button>
  <button class="flex w-[46px] flex-col items-center pt-[6px]"><svg class="mb-px" width="14" height="15" viewBox="0 0 14 15" fill="#b5b5b5"><path d="M1.500 13.500l1-4L9 3l3 3-6.500 6.500zM10 2l1-1 3 3-1 1z"/></svg>Annotate</button>
  <button class="relative flex w-[64px] flex-col items-center pt-[6px]"><svg class="mb-px" width="14" height="15" viewBox="0 0 14 15" fill="none" stroke="#b5b5b5" stroke-width="1.300"><rect x="2" y="2" width="4" height="4" rx="1"/><circle cx="10.500" cy="4" r="2"/><rect x="2" y="9" width="4" height="4" rx="1"/><rect x="8.500" y="9" width="4" height="4" rx="1"/></svg>Apps<svg class="absolute left-[47px] top-[8px]" width="6" height="4" viewBox="0 0 6 4"><path d="M.6.6L3 3 5.400.6" fill="none" stroke="#999" stroke-width="0.900"/></svg></button>
  <button class="flex w-[36px] flex-col items-center pt-[6px]"><svg class="mb-px" width="14" height="15" viewBox="0 0 14 15" fill="#b5b5b5"><circle cx="2" cy="7" r="1.400"/><circle cx="7" cy="7" r="1.400"/><circle cx="12" cy="7" r="1.400"/></svg>More</button>
  <time class="absolute bottom-[5px] right-[11px] flex h-[23px] w-[160px] items-center justify-center whitespace-pre bg-black/75 text-[14px] font-medium text-white font-['Inter',sans-serif]">2024-01-15  19:28:07</time>
</div>

<script>
const NS = 'http://www.w3.org/2000/svg';
function add(parent, tag, attrs, text) {
  const el = document.createElementNS(NS, tag);
  for (const k in attrs) el.setAttribute(k, attrs[k]);
  if (text) el.textContent = text;
  parent.appendChild(el);
}
const INCH = 134.6;
const h = document.getElementById('hruler');
for (let i = -8; i < 60; i++) {
  const x = Math.round(189 + i * INCH / 8);
  if (i === 0 || i === 52) continue;
  if (i > 0 && i < 52 && i % 8 === 0) add(h, 'text', {x, y: 9, 'text-anchor': 'middle', fill: '#555'}, String(i / 8));
  else if (i % 4 === 0) add(h, 'path', {d: `M${x} 5v4`, stroke: '#888'});
  else add(h, 'path', {d: `M${x} 6v1`, stroke: '#999'});
}
add(h, 'path', {d: 'M186 1h7v3l-3.500 3 3.500 3v4h-7v-4l3.500-3-3.500-3zM186 10h7', fill: '#fff', stroke: '#888', 'stroke-width': 0.8});
add(h, 'path', {d: 'M1060 13v-3l4-3 4 3v3z', fill: '#fff', stroke: '#888', 'stroke-width': 0.8});
const v = document.getElementById('vruler');
for (let i = -1; i <= 31; i++) {
  const y = Math.round(30 + i * INCH / 8);
  if (i % 8 === 0) add(v, 'text', {transform: `translate(10 ${y}) rotate(-90)`, 'text-anchor': 'middle', fill: '#555', 'font-size': 7}, String(4 + i / 8));
  else if (i % 4 === 0) add(v, 'path', {d: `M6 ${y}h4`, stroke: '#888'});
  else add(v, 'path', {d: `M7 ${y}h2`, stroke: '#aaa'});
}
</script>
</body>
</html>
